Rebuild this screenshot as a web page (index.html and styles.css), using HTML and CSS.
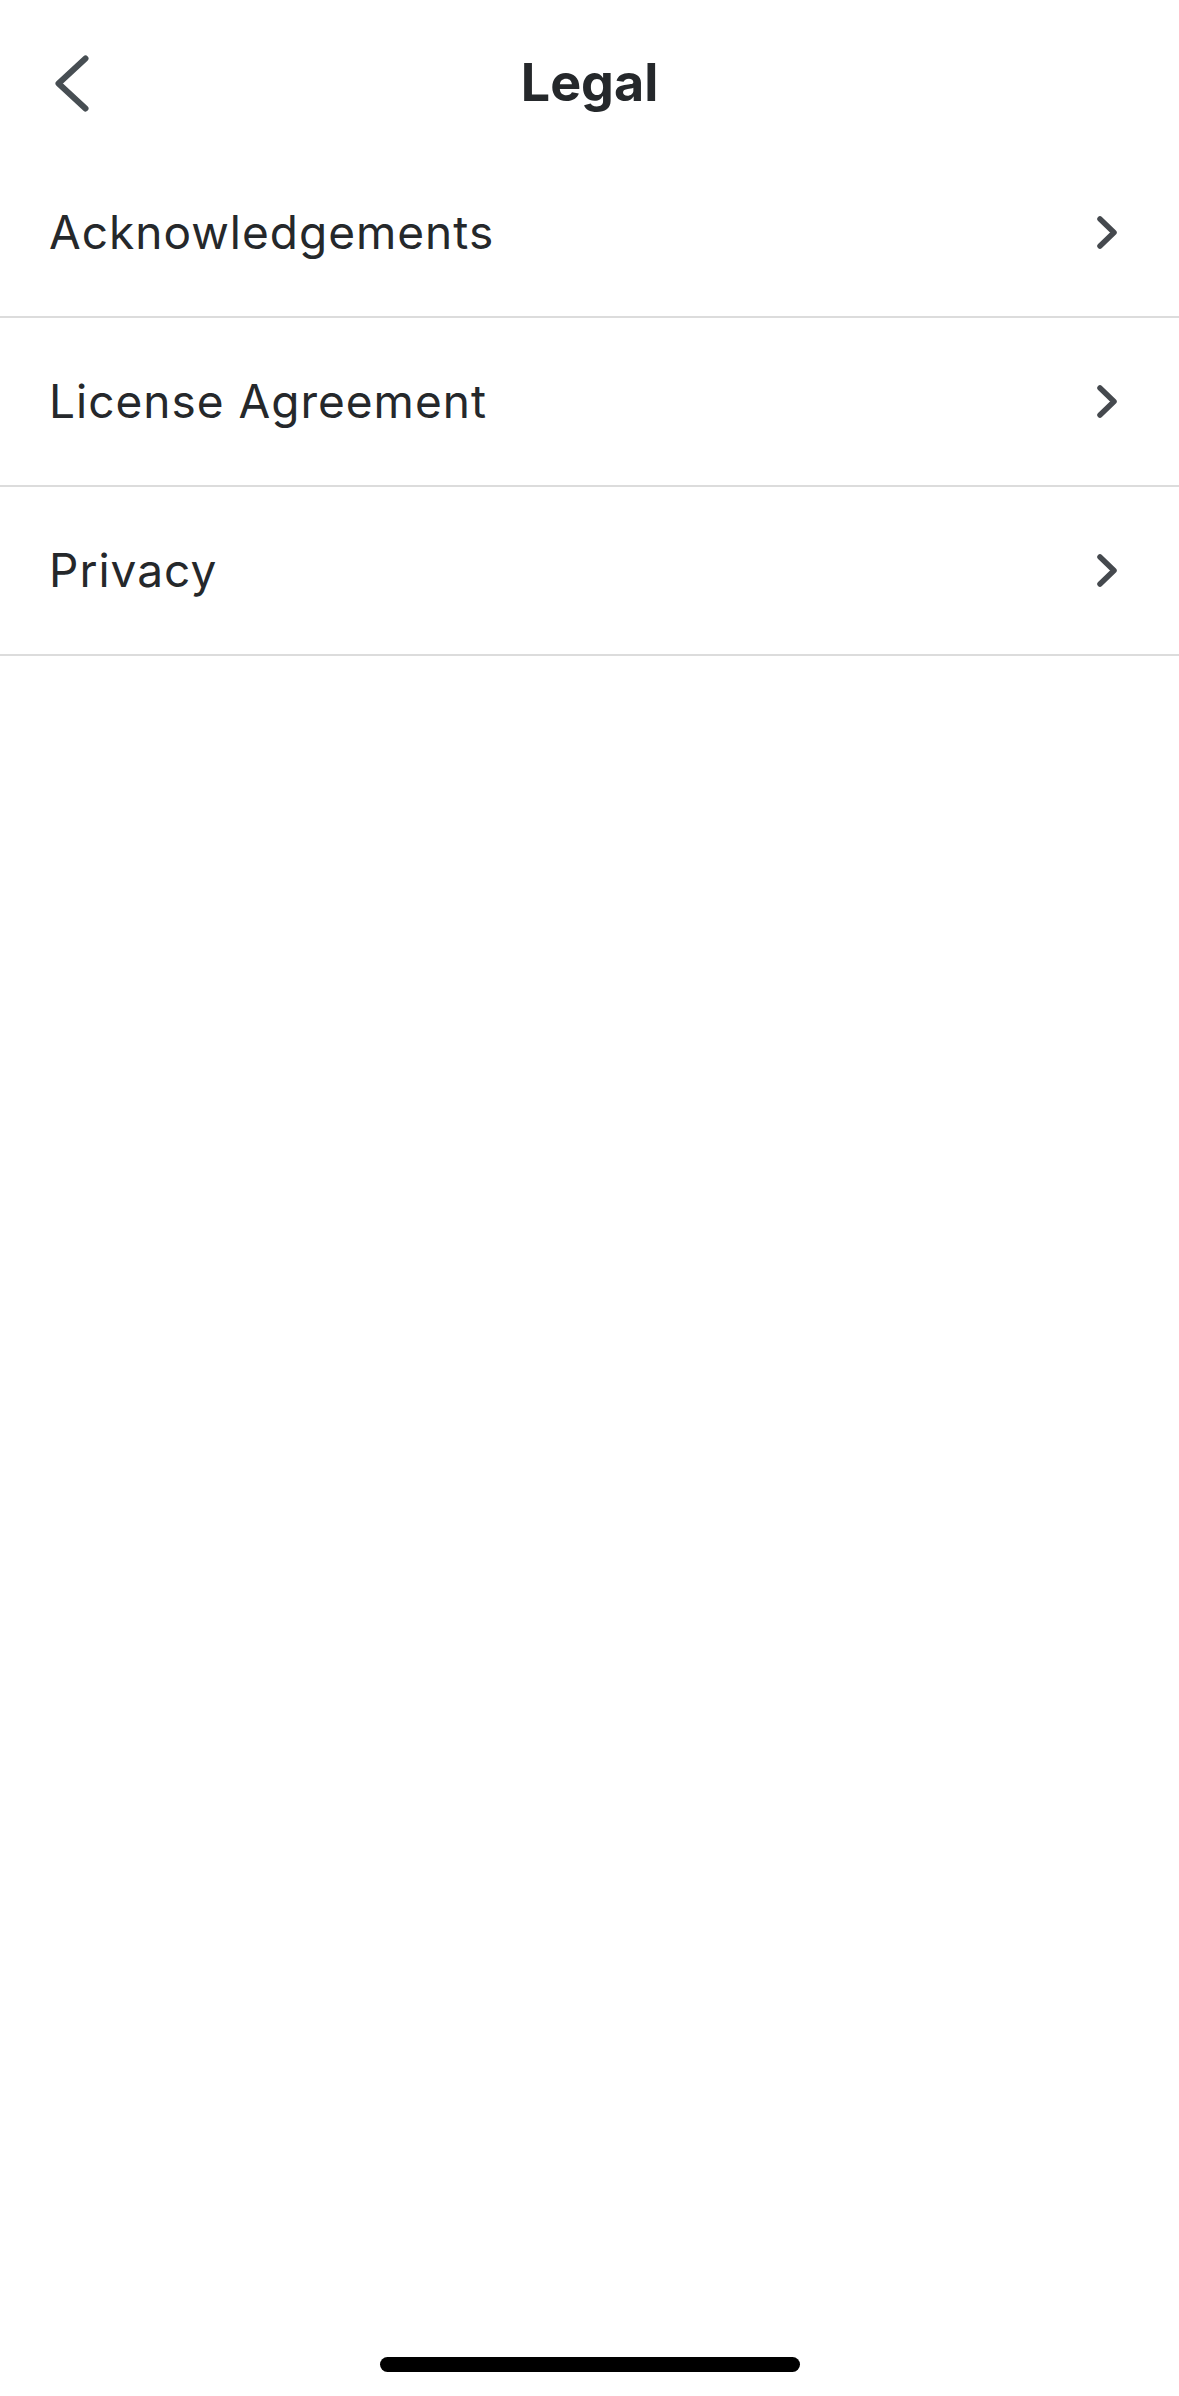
FILE: index.html
```html
<!DOCTYPE html>
<html lang="en">
<head>
<meta charset="utf-8">
<title>Legal</title>
<link rel="stylesheet" href="styles.css">
</head>
<body>
<div class="screen">
  <header class="topbar">
    <div class="topbar-left">
      <button class="back" aria-label="Back">
        <svg width="34" height="57" viewBox="0 0 34 57" aria-hidden="true"><path d="M30.5 3.5 L3.5 28.5 L30.5 53.5" fill="none" stroke="#474e53" stroke-width="6" stroke-linecap="round" stroke-linejoin="round"/></svg>
      </button>
    </div>
    <h1 class="title">Legal</h1>
    <div class="topbar-right"></div>
  </header>
  <ul class="list">
    <li class="row"><span class="label">Acknowledgements</span><svg class="chev" width="20" height="33" viewBox="0 0 20 33" aria-hidden="true"><path d="M3 3 L17 16.5 L3 30" fill="none" stroke="#45494e" stroke-width="5.5" stroke-linecap="round" stroke-linejoin="round"/></svg></li>
    <li class="row"><span class="label">License Agreement</span><svg class="chev" width="20" height="33" viewBox="0 0 20 33" aria-hidden="true"><path d="M3 3 L17 16.5 L3 30" fill="none" stroke="#45494e" stroke-width="5.5" stroke-linecap="round" stroke-linejoin="round"/></svg></li>
    <li class="row"><span class="label">Privacy</span><svg class="chev" width="20" height="33" viewBox="0 0 20 33" aria-hidden="true"><path d="M3 3 L17 16.5 L3 30" fill="none" stroke="#45494e" stroke-width="5.5" stroke-linecap="round" stroke-linejoin="round"/></svg></li>
  </ul>
  <div class="spacer"></div>
  <div class="home-indicator"></div>
</div>
</body>
</html>
```
FILE: styles.css
```css
html, body {
  margin: 0;
  padding: 0;
  background: #ffffff;
}
body {
  font-family: Inter, "Noto Sans", "Liberation Sans", sans-serif;
  color: #25282b;
}
.screen {
  min-height: 100vh;
  display: flex;
  flex-direction: column;
}
.topbar {
  box-sizing: border-box;
  height: 149px;
  padding-top: 17px;
  display: grid;
  grid-template-columns: 1fr auto 1fr;
  align-items: center;
}
.topbar-left {
  padding-left: 55px;
  display: flex;
  align-items: center;
}
.back {
  border: 0;
  background: none;
  padding: 0;
  margin: 0;
  display: flex;
  cursor: pointer;
}
.title {
  margin: 0;
  font-size: 52px;
  font-weight: 700;
  line-height: 1.21;
  color: #25282b;
}
.list {
  list-style: none;
  margin: 0;
  padding: 0;
}
.row {
  box-sizing: border-box;
  height: 169px;
  border-bottom: 2px solid #dcdcdc;
  display: flex;
  align-items: center;
  justify-content: space-between;
  padding: 0 62px 0 49px;
}
.label {
  font-size: 46px;
  font-weight: 400;
  line-height: 1.21;
  letter-spacing: 1px;
}
.chev {
  flex: none;
}
.spacer {
  flex: 1;
}
.home-indicator {
  align-self: center;
  width: 420px;
  height: 15px;
  border-radius: 8px;
  background: #000;
  margin-bottom: 24px;
}
```
